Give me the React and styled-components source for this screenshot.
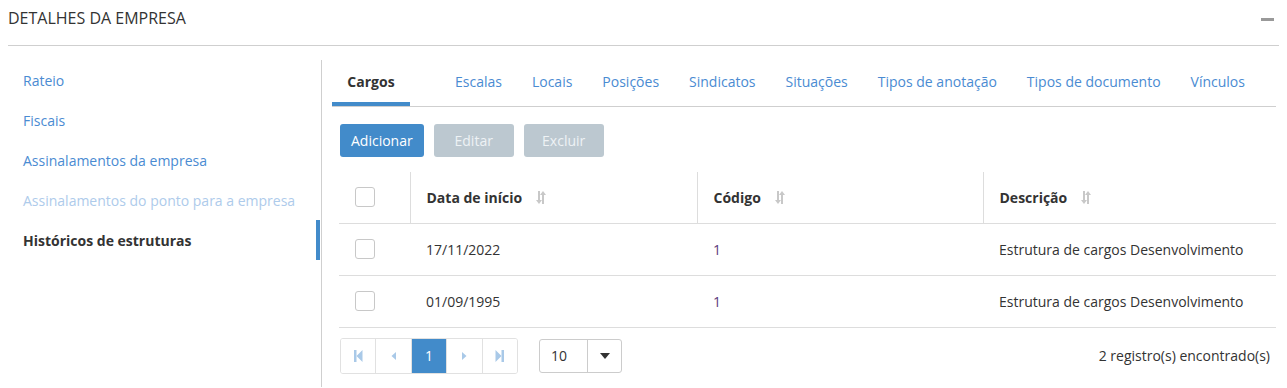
import React from "react";
import styled, { createGlobalStyle } from "styled-components";

const GlobalStyle = createGlobalStyle`
  body {
    margin: 0;
    background: #fff;
    font-family: "Open Sans", "Noto Sans", sans-serif;
    color: #333;
  }
`;

const Page = styled.div`
  padding: 0 8px;
`;

const Header = styled.div`
  height: 46px;
  box-sizing: border-box;
  padding-top: 7px;
  display: flex;
  justify-content: space-between;
  align-items: flex-start;
  border-bottom: 1px solid #cfcfcf;
`;

const HeaderTitle = styled.h1`
  margin: 0;
  font-size: 16px;
  line-height: 22px;
  font-weight: 400;
  color: #333;
`;

const Collapse = styled.span`
  width: 13px;
  height: 3px;
  background: #999;
  margin: 11px 5px 0 0;
`;

const Body = styled.div`
  display: flex;
  margin-top: 14px;
  min-height: 327px;
`;

const Sidebar = styled.nav`
  width: 313px;
  border-right: 1px solid #cfcfcf;
`;

const SideItem = styled.div`
  height: 40px;
  display: flex;
  align-items: center;
  padding-left: 15px;
  margin-right: 1px;
  font-size: 14px;
  box-sizing: border-box;
  font-weight: ${(p) => (p.$active ? 700 : 400)};
  color: ${(p) => (p.$active ? "#333" : p.$disabled ? "#aecbeb" : "#4a8bd2")};
  border-right: 4px solid ${(p) => (p.$active ? "#428bca" : "transparent")};
`;

const Main = styled.section`
  flex: 1;
  padding: 0 3px 0 10px;
`;

const Tabs = styled.div`
  display: flex;
  height: 46px;
  border-bottom: 1px solid #cfcfcf;
`;

const Tab = styled.div`
  display: flex;
  align-items: center;
  justify-content: ${(p) => (p.$active ? "center" : "flex-start")};
  width: ${(p) => (p.$active ? "78px" : "auto")};
  padding: ${(p) => (p.$active ? "0" : "0 15px")};
  margin-right: ${(p) => (p.$active ? "30px" : "0")};
  font-size: 14px;
  font-weight: ${(p) => (p.$active ? 700 : 400)};
  color: ${(p) => (p.$active ? "#333" : "#4a8bd2")};
  border-bottom: 4px solid ${(p) => (p.$active ? "#428bca" : "transparent")};
  white-space: nowrap;
`;

const Toolbar = styled.div`
  display: flex;
  gap: 10px;
  margin: 17px 0 15px 8px;
`;

const Button = styled.button`
  height: 33px;
  min-width: 80px;
  padding: 0 11px;
  border: none;
  border-radius: 3px;
  font-family: inherit;
  font-size: 14px;
  color: ${(p) => (p.$disabled ? "#eef2f5" : "#fff")};
  background: ${(p) => (p.$disabled ? "#bcc8d0" : "#428bca")};
`;

const Table = styled.table`
  margin-left: 7px;
  width: calc(100% - 7px);
  border-collapse: collapse;
  font-size: 14px;
`;

const Th = styled.th`
  height: 51px;
  text-align: left;
  font-weight: 700;
  color: #333;
  padding: 0 0 0 16px;
  border-bottom: 1px solid #ddd;
  border-left: ${(p) => (p.$first ? "none" : "1px solid #ddd")};
  width: ${(p) => p.$w || "auto"};
  box-sizing: border-box;
`;

const Td = styled.td`
  height: 52px;
  padding: 0 0 0 16px;
  border-bottom: 1px solid #ddd;
  color: ${(p) => (p.$code ? "#5b3c7c" : "#333")};
  box-sizing: border-box;
`;

const HeadLabel = styled.span`
  display: inline-flex;
  align-items: center;
  gap: 14px;
`;

const Check = styled.span`
  display: block;
  width: 18px;
  height: 18px;
  border: 1px solid #c8c8c8;
  border-radius: 3px;
`;

const Footer = styled.div`
  display: flex;
  align-items: center;
  margin: 10px 0 0 8px;
`;

const Pager = styled.div`
  display: flex;
  width: 178px;
  height: 36px;
  border: 1px solid #e1e1e1;
  border-radius: 3px;
  box-sizing: border-box;
  overflow: hidden;
`;

const PageCell = styled.div`
  flex: 1;
  display: flex;
  align-items: center;
  justify-content: center;
  border-left: ${(p) => (p.$first ? "none" : "1px solid #e1e1e1")};
  background: ${(p) => (p.$active ? "#428bca" : "#fff")};
  color: #fff;
  font-size: 14px;
`;

const SizeSelect = styled.div`
  display: flex;
  margin-left: 21px;
  height: 34px;
  width: 83px;
  box-sizing: border-box;
  border: 1px solid #ccc;
  border-radius: 3px;
`;

const SizeValue = styled.div`
  flex: 1;
  display: flex;
  align-items: center;
  padding-left: 11px;
  font-size: 14px;
  color: #333;
  border-right: 1px solid #ccc;
`;

const SizeCaret = styled.div`
  width: 33px;
  display: flex;
  align-items: center;
  justify-content: center;
`;

const Total = styled.div`
  margin-left: auto;
  padding-right: 6px;
  font-size: 14px;
  color: #333;
`;

const SortIcon = () => (
  <svg width="10" height="13" viewBox="0 0 10 13">
    <path d="M3 0v10" stroke="#c8c8c8" strokeWidth="2" />
    <path d="M0 9h6l-3 4z" fill="#c8c8c8" />
    <path d="M7 13V3" stroke="#c8c8c8" strokeWidth="2" />
    <path d="M4 4h6L7 0z" fill="#c8c8c8" />
  </svg>
);

const PagerIcon = ({ dir, bar }) => (
  <svg width="9" height="12" viewBox="0 0 9 12">
    {dir === "left" ? (
      <>
        {bar && <rect x="0" y="0" width="2.5" height="12" fill="#a9c9e8" />}
        <path d={bar ? "M8.5 0v12L2.5 6z" : "M7 2v8L2.5 6z"} fill="#a9c9e8" />
      </>
    ) : (
      <>
        {bar && <rect x="6.5" y="0" width="2.5" height="12" fill="#a9c9e8" />}
        <path d={bar ? "M0.5 0v12l6-6z" : "M2 2v8L6.5 6z"} fill="#a9c9e8" />
      </>
    )}
  </svg>
);

const sideItems = [
  { label: "Rateio" },
  { label: "Fiscais" },
  { label: "Assinalamentos da empresa" },
  { label: "Assinalamentos do ponto para a empresa", disabled: true },
  { label: "Históricos de estruturas", active: true },
];

const tabs = [
  "Cargos",
  "Escalas",
  "Locais",
  "Posições",
  "Sindicatos",
  "Situações",
  "Tipos de anotação",
  "Tipos de documento",
  "Vínculos",
];

const rows = [
  { date: "17/11/2022", code: "1", desc: "Estrutura de cargos Desenvolvimento" },
  { date: "01/09/1995", code: "1", desc: "Estrutura de cargos Desenvolvimento" },
];

export default function App() {
  return (
    <>
      <GlobalStyle />
      <Page>
        <Header>
          <HeaderTitle>DETALHES DA EMPRESA</HeaderTitle>
          <Collapse />
        </Header>
        <Body>
          <Sidebar>
            {sideItems.map((s) => (
              <SideItem key={s.label} $active={s.active} $disabled={s.disabled}>
                {s.label}
              </SideItem>
            ))}
          </Sidebar>
          <Main>
            <Tabs>
              {tabs.map((t, i) => (
                <Tab key={t} $active={i === 0}>
                  {t}
                </Tab>
              ))}
            </Tabs>
            <Toolbar>
              <Button>Adicionar</Button>
              <Button $disabled>Editar</Button>
              <Button $disabled>Excluir</Button>
            </Toolbar>
            <Table>
              <thead>
                <tr>
                  <Th $first $w="71px">
                    <Check />
                  </Th>
                  <Th $w="287px">
                    <HeadLabel>
                      Data de início <SortIcon />
                    </HeadLabel>
                  </Th>
                  <Th $w="286px">
                    <HeadLabel>
                      Código <SortIcon />
                    </HeadLabel>
                  </Th>
                  <Th>
                    <HeadLabel>
                      Descrição <SortIcon />
                    </HeadLabel>
                  </Th>
                </tr>
              </thead>
              <tbody>
                {rows.map((r) => (
                  <tr key={r.date}>
                    <Td>
                      <Check />
                    </Td>
                    <Td>{r.date}</Td>
                    <Td $code>{r.code}</Td>
                    <Td>{r.desc}</Td>
                  </tr>
                ))}
              </tbody>
            </Table>
            <Footer>
              <Pager>
                <PageCell $first>
                  <PagerIcon dir="left" bar />
                </PageCell>
                <PageCell>
                  <PagerIcon dir="left" />
                </PageCell>
                <PageCell $active>1</PageCell>
                <PageCell>
                  <PagerIcon dir="right" />
                </PageCell>
                <PageCell>
                  <PagerIcon dir="right" bar />
                </PageCell>
              </Pager>
              <SizeSelect>
                <SizeValue>10</SizeValue>
                <SizeCaret>
                  <svg width="10" height="6" viewBox="0 0 10 6">
                    <path d="M0 0h10L5 6z" fill="#333" />
                  </svg>
                </SizeCaret>
              </SizeSelect>
              <Total>2 registro(s) encontrado(s)</Total>
            </Footer>
          </Main>
        </Body>
      </Page>
    </>
  );
}
